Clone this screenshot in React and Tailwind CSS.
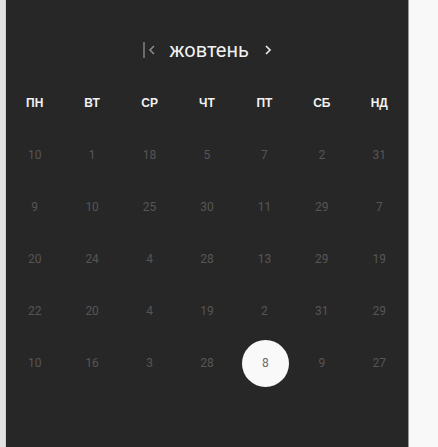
import React from 'react';

const weekDays = ['ПН', 'ВТ', 'СР', 'ЧТ', 'ПТ', 'СБ', 'НД'];

const weeks = [
  [10, 1, 18, 5, 7, 2, 31],
  [9, 10, 25, 30, 11, 29, 7],
  [20, 24, 4, 28, 13, 29, 19],
  [22, 20, 4, 19, 2, 31, 29],
  [10, 16, 3, 28, 8, 9, 27],
];

const App = () => {
  return (
    <div className="flex h-[447px] w-[438px] overflow-hidden bg-[#f8f8f8]" style={{ fontFamily: 'Roboto, "Noto Sans", sans-serif' }}>
      <div className="w-[6px] shrink-0 bg-[#e2e2e2] border-r border-[#cfcfcf]" />
      <div className="w-[403px] shrink-0 bg-[#272727] border-r border-[#9a9a9a]">
        {/* Month header */}
        <div className="mt-[36px] flex h-[28px] items-center justify-center pl-[1px]">
          <button className="flex items-center mr-[13px]">
            <span className="block h-[16px] w-[2px] bg-[#6a6a6a]" />
            <svg width="8" height="10" viewBox="0 0 8 10" className="ml-[3px]">
              <path d="M6 1 L2 5 L6 9" fill="none" stroke="#8a8a8a" strokeWidth="1.6" />
            </svg>
          </button>
          <span className="text-[20px] leading-none text-[#f2f2f2]">жовтень</span>
          <button className="ml-[15px]">
            <svg width="8" height="10" viewBox="0 0 8 10">
              <path d="M2 1 L6 5 L2 9" fill="none" stroke="#e8e8e8" strokeWidth="1.7" />
            </svg>
          </button>
        </div>

        {/* Weekday names */}
        <div className="mt-[13px] grid grid-cols-7">
          {weekDays.map(d => (
            <div
              key={d}
              className="flex h-[52px] items-center justify-center text-[12px] font-bold text-[#f0f0f0]"
              style={{ fontFamily: '"Liberation Sans", Arial, sans-serif' }}
            >
              {d}
            </div>
          ))}
        </div>

        {/* Days */}
        {weeks.map((week, wi) => (
          <div key={wi} className="grid grid-cols-7">
            {week.map((day, di) => {
              const selected = wi === 4 && di === 4;
              return (
                <div key={di} className="flex h-[52px] items-center justify-center">
                  {selected ? (
                    <div className="ml-[2px] flex h-[47px] w-[47px] shrink-0 items-center justify-center rounded-full bg-[#f9f9f9] text-[12px] text-[#6a6a6a]">
                      {day}
                    </div>
                  ) : (
                    <span className="text-[12px] text-[#565656]">{day}</span>
                  )}
                </div>
              );
            })}
          </div>
        ))}
      </div>
    </div>
  );
};

export default App;
